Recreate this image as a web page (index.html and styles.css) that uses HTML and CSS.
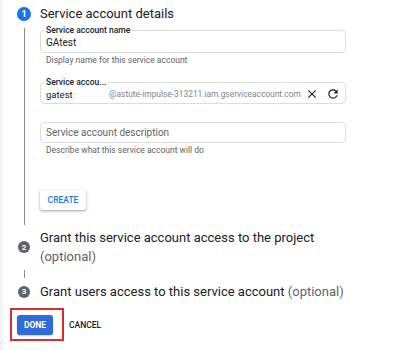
FILE: index.html
```html
<!DOCTYPE html>
<html lang="en">
<head>
<meta charset="utf-8">
<title>Create service account</title>
<link rel="stylesheet" href="styles.css">
</head>
<body>
<div class="stepper">
  <div class="step-head">
    <span class="num active">1</span>
    <span class="step-title">Service account details</span>
  </div>
  <div class="step-body">
    <div class="field">
      <span class="label">Service account name</span>
      <span class="value">GAtest</span>
    </div>
    <div class="helper">Display name for this service account</div>

    <div class="field field-id">
      <span class="label">Service accou...</span>
      <span class="value id-value">gatest</span>
      <span class="suffix">@astute-impulse-313211.iam.gserviceaccount.com</span>
      <span class="icons">
        <svg class="icon" viewBox="0 0 24 24"><path d="M19 6.41L17.59 5 12 10.59 6.41 5 5 6.41 10.59 12 5 17.59 6.41 19 12 13.41 17.59 19 19 17.59 13.41 12z"/></svg>
        <svg class="icon" viewBox="0 0 24 24"><path d="M17.65 6.35C16.2 4.9 14.21 4 12 4c-4.42 0-7.990 3.58-7.990 8s3.57 8 7.990 8c3.73 0 6.84-2.55 7.73-6h-2.080c-.82 2.33-3.040 4-5.650 4-3.310 0-6-2.690-6-6s2.690-6 6-6c1.660 0 3.140.69 4.220 1.780L13 11h7V4l-2.350 2.350z"/></svg>
      </span>
    </div>

    <div class="field field-desc">
      <span class="placeholder">Service account description</span>
    </div>
    <div class="helper">Describe what this service account will do</div>

    <button class="btn-create">CREATE</button>
  </div>

  <div class="step-row step-two">
    <span class="num gray">2</span>
    <span class="step-text">Grant this service account access to the project <span class="optional">(optional)</span></span>
  </div>
  <div class="connector"></div>
  <div class="step-row step-three">
    <span class="num gray">3</span>
    <span class="step-text">Grant users access to this service account <span class="optional">(optional)</span></span>
  </div>

  <div class="actions">
    <div class="highlight">
      <button class="btn-done">DONE</button>
    </div>
    <span class="btn-cancel">CANCEL</span>
  </div>
</div>
</body>
</html>
```

FILE: styles.css
```css
* {
  box-sizing: border-box;
}

html, body {
  margin: 0;
  padding: 0;
  background: #fff;
}

body {
  font-family: Roboto, "Liberation Sans", sans-serif;
  color: #202124;
  border-left: 3px solid #f1f3f4;
  min-height: 350px;
}

.stepper {
  display: flex;
  flex-direction: column;
}

.step-head {
  display: flex;
  align-items: center;
  height: 28px;
  padding-left: 14px;
  gap: 9px;
}

.num {
  display: flex;
  align-items: center;
  justify-content: center;
  border-radius: 50%;
  color: #fff;
  font-weight: 700;
  flex: none;
}

.num.active {
  width: 14px;
  height: 14px;
  background: #1a73e8;
  font-size: 9px;
}

.num.gray {
  width: 12px;
  height: 12px;
  background: #5f6368;
  font-size: 8px;
}

.step-title {
  font-size: 13px;
  line-height: 16px;
  color: #202124;
}

.step-body {
  margin-left: 21px;
  border-left: 1px solid #8a8d91;
  padding: 2px 0 15px 15px;
  display: flex;
  flex-direction: column;
  align-items: flex-start;
}

.field {
  position: relative;
  width: 306px;
  height: 23px;
  border: 1px solid #dadce0;
  border-radius: 4px;
  display: flex;
  align-items: center;
  padding: 2px 5px 0 5px;
}

.field .label {
  position: absolute;
  top: -6px;
  left: 3px;
  padding: 0 2px;
  background: #fff;
  font-size: 8.5px;
  font-weight: 500;
  line-height: 11px;
  color: #202124;
}

.value {
  font-size: 10px;
  color: #202124;
}

.helper {
  font-size: 8.5px;
  line-height: 11px;
  color: #5f6368;
  margin-top: 2px;
  padding-left: 6px;
}

.field-id {
  margin-top: 16px;
  height: 22px;
}

.id-value {
  width: 63px;
  flex: none;
  font-size: 9.5px;
}

.suffix {
  font-size: 8.4px;
  color: #80868b;
  white-space: nowrap;
}

.icons {
  margin-left: auto;
  display: flex;
  gap: 7px;
  align-items: center;
}

.icon {
  width: 14px;
  height: 14px;
  fill: #202124;
  display: block;
}

.field-desc {
  margin-top: 18px;
  height: 21px;
  padding-top: 0;
}

.placeholder {
  font-size: 10px;
  color: #5f6368;
}

.btn-create {
  margin-top: 34px;
  height: 20px;
  width: 46px;
  border: none;
  border-radius: 3px;
  background: #fff;
  color: #1a73e8;
  font-family: inherit;
  font-size: 8.5px;
  font-weight: 500;
  padding: 0;
  box-shadow: 0 1px 2px rgba(60, 64, 67, 0.3), 0 1px 3px 1px rgba(60, 64, 67, 0.15);
}

.step-row {
  display: flex;
  align-items: center;
  padding-left: 15px;
  gap: 10px;
}

.step-two {
  margin-top: 3px;
}

.step-three {
  margin-top: 4px;
}

.step-text {
  font-size: 13px;
  line-height: 19px;
  color: #202124;
  max-width: 318px;
}

.optional {
  color: #5f6368;
}

.connector {
  margin-left: 21px;
  margin-top: 4px;
  width: 1px;
  height: 8px;
  background: #8a8d91;
}

.actions {
  display: flex;
  align-items: center;
  margin-top: 7px;
  padding-left: 7px;
}

.highlight {
  border: 2px solid #e02b2b;
  padding: 5px 9px 4px 5px;
  display: flex;
}

.btn-done {
  width: 36px;
  height: 20px;
  border: none;
  border-radius: 3px;
  background: #2f6bdb;
  color: #fff;
  font-family: inherit;
  font-size: 8.5px;
  font-weight: 700;
  padding: 0;
  box-shadow: 0 1px 2px rgba(60, 64, 67, 0.3);
}

.btn-cancel {
  margin-left: 5px;
  font-size: 8.5px;
  font-weight: 500;
  color: #202124;
}
```
